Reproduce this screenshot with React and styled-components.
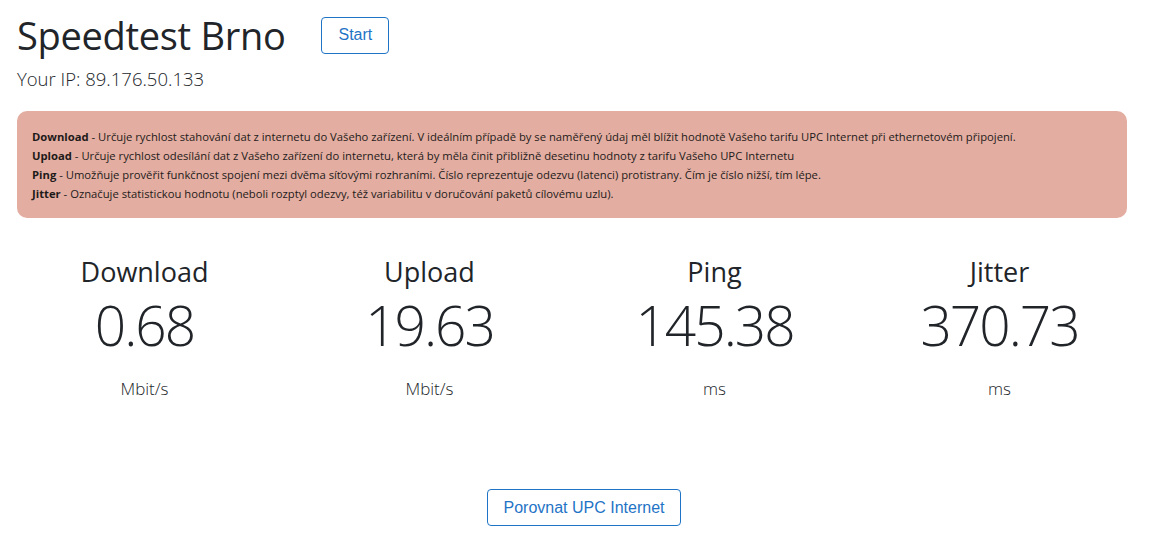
import React from 'react';
import styled, { createGlobalStyle } from 'styled-components';

const GlobalStyle = createGlobalStyle`
  body {
    margin: 0;
    background: #fff;
    color: #212529;
    font-family: "Open Sans", "Noto Sans", sans-serif;
  }
`;

const stats = [
  { label: 'Download', value: '0.68', unit: 'Mbit/s' },
  { label: 'Upload', value: '19.63', unit: 'Mbit/s' },
  { label: 'Ping', value: '145.38', unit: 'ms' },
  { label: 'Jitter', value: '370.73', unit: 'ms' },
];

const notes = [
  ['Download', 'Určuje rychlost stahování dat z internetu do Vašeho zařízení. V ideálním případě by se naměřený údaj měl blížit hodnotě Vašeho tarifu UPC Internet při ethernetovém připojení.'],
  ['Upload', 'Určuje rychlost odesílání dat z Vašeho zařízení do internetu, která by měla činit přibližně desetinu hodnoty z tarifu Vašeho UPC Internetu'],
  ['Ping', 'Umožňuje prověřit funkčnost spojení mezi dvěma síťovými rozhraními. Číslo reprezentuje odezvu (latenci) protistrany. Čím je číslo nižší, tím lépe.'],
  ['Jitter', 'Označuje statistickou hodnotu (neboli rozptyl odezvy, též variabilitu v doručování paketů cílovému uzlu).'],
];

const App = () => {
  return (
    <Page>
      <GlobalStyle />
      <Header>
        <Title>Speedtest Brno</Title>
        <OutlineButton>Start</OutlineButton>
      </Header>
      <Ip>Your IP: 89.176.50.133</Ip>

      <Alert>
        {notes.map(([name, text]) => (
          <NoteLine key={name}>
            <b>{name}</b> - {text}
          </NoteLine>
        ))}
      </Alert>

      <StatsRow>
        {stats.map((s) => (
          <Stat key={s.label}>
            <StatLabel>{s.label}</StatLabel>
            <StatValue>{s.value}</StatValue>
            <StatUnit>{s.unit}</StatUnit>
          </Stat>
        ))}
      </StatsRow>

      <Footer>
        <OutlineButton>Porovnat UPC Internet</OutlineButton>
      </Footer>
    </Page>
  );
};

export default App;

const Page = styled.main`
  width: 1110px;
  padding: 7px 0 0 17px;
`;

const Header = styled.div`
  display: flex;
  align-items: center;
  gap: 36px;
`;

const Title = styled.h1`
  margin: 0;
  font-size: 38px;
  font-weight: 400;
  line-height: 56px;
  letter-spacing: -0.3px;
`;

const OutlineButton = styled.button`
  font-family: "Liberation Sans", Arial, sans-serif;
  font-size: 16px;
  color: #1f74c6;
  background: #fff;
  border: 1px solid #1f74c6;
  border-radius: 4px;
  height: 37px;
  padding: 0 16px;
  cursor: pointer;
`;

const Ip = styled.div`
  font-size: 18.5px;
  font-weight: 300;
  margin-top: 3px;
  line-height: 26px;
`;

const Alert = styled.div`
  margin-top: 19px;
  background: #e3aea1;
  border-radius: 10px;
  padding: 16px 15px 15px;
  font-size: 11.25px;
  line-height: 19px;
  color: #1e1a1a;
`;

const NoteLine = styled.div`
  white-space: nowrap;
  b { font-weight: 700; }
`;

const StatsRow = styled.div`
  display: grid;
  grid-template-columns: repeat(4, 285px);
  margin: 36px 0 0 -15px;
`;

const Stat = styled.div`
  display: flex;
  flex-direction: column;
  align-items: center;
  padding: 0 15px;
`;

const StatLabel = styled.div`
  font-size: 27px;
  line-height: 36px;
`;

const StatValue = styled.div`
  font-size: 55px;
  font-weight: 300;
  letter-spacing: -2px;
  line-height: 64px;
  margin-top: 3px;
`;

const StatUnit = styled.div`
  font-size: 17px;
  font-weight: 300;
  margin-top: 19px;
  line-height: 26px;
`;

const Footer = styled.div`
  display: flex;
  justify-content: center;
  padding-left: 24px;
  margin-top: 87px;
`;
